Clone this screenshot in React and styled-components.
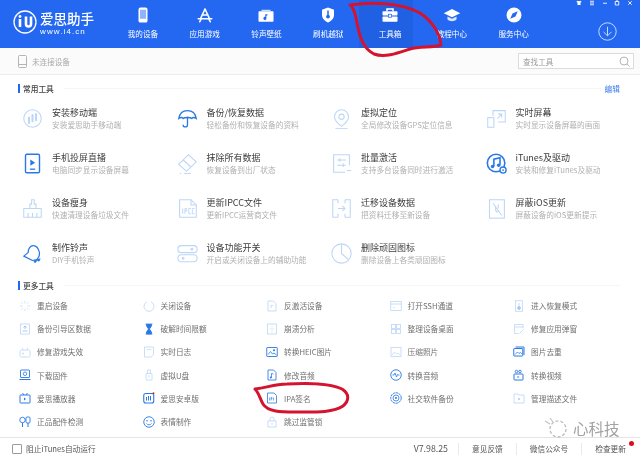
import React from "react";
import styled, { createGlobalStyle } from "styled-components";

const GlobalStyle = createGlobalStyle`
  html, body {
    margin: 0;
    padding: 0;
    background: #fff;
    font-family: "Noto Sans CJK SC", "Liberation Sans", sans-serif;
  }
`;

const LIGHT = "#bcd6f6";
const STRONG = "#2a78e6";

// every drawing sits in a 24x24 box
const icons = {
  // nav
  phone: <><rect x="6" y="2" width="12" height="20" rx="2.5" fill="#fff" /><rect x="8" y="5" width="8" height="12" fill="#8fb4fa" /></>,
  appstore: <path d="M12 4 6 17M12 4l6 13M3 17h18M8 12h8M5 21l2-4M19 21l-2-4" fill="none" stroke="#fff" strokeWidth="2.2" strokeLinecap="round" />,
  ring: <><path d="M3 7h18a1 1 0 0 1 1 1v12a1 1 0 0 1-1 1H3a1 1 0 0 1-1-1V8a1 1 0 0 1 1-1z" fill="#fff" /><path d="M6 5h12v2H6z" fill="#cfdcfb" /><path d="M11 11h3v1.500h-1.500v4a2 2 0 1 1-1.500-1.900z" fill="#2468f2" /></>,
  shield: <><path d="M12 2 20 5v7c0 5-4 8-8 10-4-2-8-5-8-10V5z" fill="#fff" /><circle cx="12" cy="14" r="2.500" fill="#2468f2" /><rect x="11" y="6" width="2" height="6" fill="#2468f2" /></>,
  toolbox: <><path d="M8 7V4h8v3" fill="none" stroke="#fff" strokeWidth="2" /><rect x="2" y="7" width="20" height="5.500" rx="1" fill="#fff" /><rect x="2" y="14" width="20" height="7" rx="1" fill="#fff" /><rect x="10" y="11" width="4" height="4" fill="#fff" stroke="#2468f2" /></>,
  cap: <><path d="M12 4 23 9.500 12 15 1 9.500z" fill="#fff" /><path d="M6 14v4c3 3 9 3 12 0v-4l-6 3z" fill="#dbe6fd" /></>,
  compass: <><circle cx="12" cy="12" r="10" fill="#fff" /><path d="M17 7 14 14 7 17 10 10z" fill="#2468f2" /></>,

  // big tools
  install: <><circle cx="12" cy="12" r="10" fill="none" stroke={LIGHT} strokeWidth="1.200" /><path d="M8 11v6M12 8v7M16 7v7" stroke={LIGHT} strokeWidth="2.400" strokeLinecap="round" /></>,
  umbrella: <><path d="M2 12C3 6 7 3 12 3s9 3 10 9c-2-1.500-4-1.500-5 0-1.500-1.500-8.500-1.500-10 0-1-1.500-3-1.500-5 0z" fill="none" stroke={STRONG} strokeWidth="1.500" /><path d="M12 10v9a2.500 2.500 0 0 1-5 0" fill="none" stroke={STRONG} strokeWidth="1.500" /></>,
  pin: <><path d="M12 2a8 8 0 0 1 8 8c0 4-4 8-8 11-4-3-8-7-8-11a8 8 0 0 1 8-8z" fill="none" stroke={LIGHT} strokeWidth="1.200" /><circle cx="12" cy="10" r="3" fill="none" stroke={LIGHT} strokeWidth="1.200" /><path d="M5 23.500h14" stroke={LIGHT} strokeWidth="1" /></>,
  mirror: <><path d="M8 9V3h14v13H14" fill="none" stroke={LIGHT} strokeWidth="1.200" /><rect x="2" y="11" width="7" height="11" fill="none" stroke={LIGHT} strokeWidth="1.200" /><path d="M13 12l5-5M14 7h4v4" fill="none" stroke={LIGHT} strokeWidth="1.200" /></>,
  cast: <><rect x="4" y="1.500" width="16" height="21" rx="1.500" fill="none" stroke={STRONG} strokeWidth="1.600" /><path d="M9.500 7.500 15 11l-5.500 3.500z" fill={STRONG} /><path d="M9 18.500h6" stroke={STRONG} strokeWidth="1.500" /></>,
  eraser: <><path d="M2 13 13 2l9 8-11 11z" fill="none" stroke={LIGHT} strokeWidth="1.200" /><path d="M7 8l9 8" stroke={LIGHT} strokeWidth="1.200" /><path d="M3 23.500h2M8 23.500h8" stroke={LIGHT} strokeWidth="1" /></>,
  batch: <><path d="M21 14V2H3v20h13" fill="none" stroke={LIGHT} strokeWidth="1.200" /><path d="M7 8h10M7 14h10M10 6v4M14 12v4M18 20h5" fill="none" stroke={LIGHT} strokeWidth="1.200" /></>,
  itunes: <><circle cx="11.500" cy="11.500" r="10" fill="none" stroke={STRONG} strokeWidth="1.800" /><path d="M9 15V7l7-1.500v8" fill="none" stroke={STRONG} strokeWidth="1.800" /><circle cx="7.500" cy="15.500" r="2" fill={STRONG} /><circle cx="14.500" cy="14" r="2" fill={STRONG} /><circle cx="19.500" cy="19.500" r="3.500" fill="#fff" stroke={STRONG} strokeWidth="1.500" /><circle cx="19.500" cy="19.500" r="1" fill={STRONG} /></>,
  brush: <><path d="M2 12h20v10H2zM9 12V7h2V2h3v5h2v5" fill="none" stroke={LIGHT} strokeWidth="1.200" /><path d="M7 17v5M12 17v5M17 17v5" stroke={LIGHT} strokeWidth="1.200" /></>,
  ipcc: <><path d="M3 2h13l6 6v14H3z" fill="none" stroke={LIGHT} strokeWidth="1.200" /><path d="M16 2v6h6" fill="none" stroke={LIGHT} strokeWidth="1.200" /><path d="M6.500 12v6M9 18v-6h2v3H9M16 12h-2.500v6H16M20 12h-2.500v6H20" fill="none" stroke={LIGHT} strokeWidth="1" /></>,
  migrate: <><path d="M8 2H2v20h6M16 2h6v20h-6" fill="none" stroke={LIGHT} strokeWidth="1.200" /><path d="M8 12h8M13 9l3 3-3 3M8 2v4M8 18v4M16 2v4M16 18v4" fill="none" stroke={LIGHT} strokeWidth="1.200" /></>,
  noupdate: <><rect x="4" y="2" width="17" height="21" fill="none" stroke={LIGHT} strokeWidth="1.200" /><path d="M8 6l10 14M11 9v4a3 3 0 0 0 3 3M14 7v5" fill="none" stroke={LIGHT} strokeWidth="1.200" /></>,
  bell: <><path d="M2 15 7 11c0-4 2-8 6-8s6 4 7 8c0 2 0 4-1 5l-2 3-5 1z" fill="none" stroke={STRONG} strokeWidth="1.400" strokeLinejoin="round" /><circle cx="19" cy="19.500" r="1.500" fill={STRONG} /><circle cx="15" cy="21" r="1.500" fill={STRONG} /><path d="M15 21l6-3" stroke={STRONG} strokeWidth="1.200" /></>,
  toggles: <><rect x="1" y="3" width="22" height="8" rx="4" fill="none" stroke={LIGHT} strokeWidth="1.200" /><circle cx="17" cy="7" r="1.500" fill={LIGHT} /><rect x="1" y="13.500" width="22" height="8" rx="4" fill="none" stroke={LIGHT} strokeWidth="1.200" /><circle cx="7" cy="17.500" r="1.500" fill={LIGHT} /></>,
  pie: <><circle cx="12" cy="12" r="11" fill="none" stroke={LIGHT} strokeWidth="1.200" /><path d="M12 1v11l8 7" fill="none" stroke={LIGHT} strokeWidth="1.200" /></>,

  // small tools
  restart: <path d="M12 2v5M12 17v5M2 12h5M17 12h5M5 5l3 3M16 16l3 3M19 5l-3 3M8 16l-3 3" stroke={LIGHT} strokeWidth="1.800" strokeDasharray="2 1" />,
  power: <path d="M8 3.500a10 10 0 1 0 8 0" fill="none" stroke={LIGHT} strokeWidth="1.600" />,
  fileArrow: <><path d="M4 2h11l5 5v15H4z" fill="none" stroke={LIGHT} strokeWidth="1.600" /><path d="M14 11h-4v5" fill="none" stroke={LIGHT} strokeWidth="1.600" /></>,
  terminal: <><rect x="1.500" y="3" width="21" height="18" fill="none" stroke={LIGHT} strokeWidth="1.600" /><path d="M1.500 8h21M6 15h3" stroke={LIGHT} strokeWidth="1.600" /></>,
  recovery: <><rect x="5" y="1.500" width="14" height="21" fill="none" stroke={LIGHT} strokeWidth="1.600" /><path d="M12 6v6" stroke={LIGHT} strokeWidth="1.600" /><circle cx="12" cy="16" r="2.500" fill="none" stroke={STRONG} strokeWidth="1.200" /></>,
  sector: <><rect x="3" y="2" width="18" height="20" fill="none" stroke={LIGHT} strokeWidth="1.600" /><path d="M7 16h10M12 12V7M9 9l3-3 3 3" fill="none" stroke={STRONG} strokeWidth="1.200" opacity=".7" /></>,
  hourglass: <path d="M5 2h14M5 22h14M7 2v4l4 6-4 6v4h10v-4l-4-6 4-6V2" fill={STRONG} stroke={STRONG} strokeWidth="1.500" />,
  crash: <><rect x="3" y="2" width="18" height="20" fill="none" stroke={LIGHT} strokeWidth="1.600" /><path d="M12 2v20M7 12h10" stroke={LIGHT} strokeWidth="1.200" strokeDasharray="2 2" /></>,
  desktop: <><rect x="3" y="3" width="8" height="8" fill="none" stroke={LIGHT} strokeWidth="1.600" /><rect x="13" y="3" width="8" height="8" fill="none" stroke={LIGHT} strokeWidth="1.600" /><rect x="3" y="13" width="8" height="8" fill="none" stroke={LIGHT} strokeWidth="1.600" /><rect x="13" y="13" width="8" height="8" fill="none" stroke={LIGHT} strokeWidth="1.600" /></>,
  popup: <><path d="M20 11V3H3v18h8" fill="none" stroke={LIGHT} strokeWidth="1.600" /><path d="M3 8h17M13 21l8-8" stroke={LIGHT} strokeWidth="1.600" /></>,
  game: <><rect x="2" y="8" width="20" height="14" rx="3" fill="none" stroke={LIGHT} strokeWidth="1.600" /><path d="M8 8 6 3M16 8l2-5M6 15h4M8 13v4" stroke={LIGHT} strokeWidth="1.400" /></>,
  log: <><path d="M3 2h18v15l-5 5H3z" fill="none" stroke={LIGHT} strokeWidth="1.600" /><path d="M7 7h10" stroke={LIGHT} strokeWidth="1.400" /></>,
  heic: <><rect x="1.500" y="3" width="21" height="18" rx="1" fill="none" stroke={STRONG} strokeWidth="1.800" /><circle cx="16" cy="8.500" r="2" fill={STRONG} /><path d="M4 17l5-6 4 5 3-2 5 4" fill="none" stroke={STRONG} strokeWidth="1.600" /></>,
  photo: <><rect x="2" y="3" width="20" height="18" fill="none" stroke={LIGHT} strokeWidth="1.600" /><path d="M4 18l5-6 4 4 3-2 4 4" fill="none" stroke={LIGHT} strokeWidth="1.400" /></>,
  watermark: <><rect x="1.500" y="5" width="18" height="15" rx="1" fill="none" stroke={STRONG} strokeWidth="2" /><path d="M5 2h17v16" fill="none" stroke={STRONG} strokeWidth="2" /><path d="M4 17l5-5 3 3 3-2 3 3" fill="none" stroke={STRONG} strokeWidth="1.600" /></>,
  firmware: <><rect x="3" y="2" width="18" height="15" rx="1" fill="none" stroke={STRONG} strokeWidth="1.800" /><circle cx="12" cy="9.500" r="3.500" fill="none" stroke={STRONG} strokeWidth="1.600" /><path d="M1 21h22" stroke={STRONG} strokeWidth="2" /></>,
  udisk: <><rect x="6" y="9" width="12" height="13" rx="1" fill="none" stroke={LIGHT} strokeWidth="1.600" /><path d="M9 9V2h6v7M12 13v4" fill="none" stroke={LIGHT} strokeWidth="1.600" /></>,
  audioFile: <><path d="M4 2h11l5 5v15H4z" fill="none" stroke={STRONG} strokeWidth="1.700" /><path d="M11 17V9l4 1" fill="none" stroke={STRONG} strokeWidth="1.600" /><circle cx="9.500" cy="17" r="2" fill={STRONG} /></>,
  wave: <><circle cx="12" cy="12" r="10.500" fill="none" stroke={STRONG} strokeWidth="1.800" /><path d="M5 12h3l2-4 3 8 2-5 1 1h3" fill="none" stroke={STRONG} strokeWidth="1.600" /></>,
  video: <><rect x="2" y="10" width="18" height="12" rx="1" fill="none" stroke={STRONG} strokeWidth="2" /><circle cx="7" cy="5" r="2.500" fill="none" stroke={STRONG} strokeWidth="1.800" /><circle cx="14" cy="5" r="2.500" fill="none" stroke={STRONG} strokeWidth="1.800" /><path d="M9 14v4l4-2z" fill={STRONG} /></>,
  player: <><rect x="2" y="6" width="20" height="16" rx="1" fill="none" stroke={STRONG} strokeWidth="2" /><path d="M7 2l3 4M17 2l-3 4" stroke={STRONG} strokeWidth="1.800" /><path d="M10 11v6l4-3z" fill={STRONG} /></>,
  android: <><rect x="1.500" y="3" width="20" height="19" rx="4" fill="none" stroke={STRONG} strokeWidth="2.200" /><path d="M7 10v7M11 8v9M15 8v9" stroke={STRONG} strokeWidth="2" /><circle cx="21" cy="2.500" r="2" fill="#e0202c" /></>,
  ipa: <><path d="M3 2h13l5 5v15H3z" fill="none" stroke={STRONG} strokeWidth="1.600" /><path d="M7 11v6M10 17v-6h2v3h-2M15 17v-6" fill="none" stroke={STRONG} strokeWidth="1.200" /></>,
  social: <><circle cx="12" cy="12" r="10.500" fill="none" stroke={STRONG} strokeWidth="1.800" strokeDasharray="5 1" /><circle cx="12" cy="12" r="6" fill="none" stroke={STRONG} strokeWidth="1.600" /><circle cx="12" cy="12" r="2" fill={STRONG} /></>,
  profile: <><path d="M2 4h8l2 2h10v16H2z" fill="none" stroke={LIGHT} strokeWidth="1.600" /><rect x="10" y="12" width="4" height="4" fill={LIGHT} /></>,
  accessory: <><circle cx="7" cy="8" r="5.500" fill="none" stroke={STRONG} strokeWidth="1.800" /><rect x="14" y="2" width="8" height="12" rx="2" fill="none" stroke={STRONG} strokeWidth="1.800" /><path d="M7 14v8M18 14v8" stroke={STRONG} strokeWidth="2" /></>,
  smile: <><circle cx="12" cy="12" r="10.500" fill="none" stroke={STRONG} strokeWidth="1.800" /><circle cx="8" cy="9.500" r="1.500" fill={STRONG} /><circle cx="16" cy="9.500" r="1.500" fill={STRONG} /><path d="M7 15c2 3.500 8 3.500 10 0" fill="none" stroke={STRONG} strokeWidth="1.600" /></>,
  lock: <><rect x="4" y="10" width="16" height="12" fill="none" stroke={LIGHT} strokeWidth="1.600" /><path d="M8 10V6a4 4 0 0 1 8 0v4M12 14v4" fill="none" stroke={LIGHT} strokeWidth="1.600" /></>,
};

const navItems = [
  { label: "我的设备", icon: "phone" },
  { label: "应用游戏", icon: "appstore" },
  { label: "铃声壁纸", icon: "ring" },
  { label: "刷机越狱", icon: "shield" },
  { label: "工具箱", icon: "toolbox", active: true },
  { label: "教程中心", icon: "cap" },
  { label: "服务中心", icon: "compass" },
];

const commonTools = [
  { icon: "install", title: "安装移动端", desc: "安装爱思助手移动端" },
  { icon: "umbrella", title: "备份/恢复数据", desc: "轻松备份和恢复设备的资料" },
  { icon: "pin", title: "虚拟定位", desc: "全局修改设备GPS定位信息" },
  { icon: "mirror", title: "实时屏幕", desc: "实时显示设备屏幕的画面" },
  { icon: "cast", title: "手机投屏直播", desc: "电脑同步显示设备屏幕" },
  { icon: "eraser", title: "抹除所有数据", desc: "恢复设备到出厂状态" },
  { icon: "batch", title: "批量激活", desc: "支持多台设备同时进行激活" },
  { icon: "itunes", title: "iTunes及驱动", desc: "安装和修复iTunes及驱动" },
  { icon: "brush", title: "设备瘦身", desc: "快速清理设备垃圾文件" },
  { icon: "ipcc", title: "更新IPCC文件", desc: "更新IPCC运营商文件" },
  { icon: "migrate", title: "迁移设备数据", desc: "把资料迁移至新设备" },
  { icon: "noupdate", title: "屏蔽iOS更新", desc: "屏蔽设备的iOS更新提示" },
  { icon: "bell", title: "制作铃声", desc: "DIY手机铃声" },
  { icon: "toggles", title: "设备功能开关", desc: "开启或关闭设备上的辅助功能" },
  { icon: "pie", title: "删除顽固图标", desc: "删除设备上各类顽固图标" },
];

const moreTools = [
  ["restart", "重启设备"], ["power", "关闭设备"], ["fileArrow", "反激活设备"], ["terminal", "打开SSH通道"], ["recovery", "进入恢复模式"],
  ["sector", "备份引导区数据"], ["hourglass", "破解时间限额"], ["crash", "崩溃分析"], ["desktop", "整理设备桌面"], ["popup", "修复应用弹窗"],
  ["game", "修复游戏失效"], ["log", "实时日志"], ["heic", "转换HEIC图片"], ["photo", "压缩照片"], ["watermark", "图片去重"],
  ["firmware", "下载固件"], ["udisk", "虚拟U盘"], ["audioFile", "修改音频"], ["wave", "转换音频"], ["video", "转换视频"],
  ["player", "爱思播放器"], ["android", "爱思安卓版"], ["ipa", "IPA签名"], ["social", "社交软件备份"], ["profile", "管理描述文件"],
  ["accessory", "正品配件检测"], ["smile", "表情制作"], ["lock", "跳过监管锁"],
];

const Page = styled.div`
  position: relative;
  width: 640px;
  height: 457px;
  overflow: hidden;
  display: flex;
  flex-direction: column;
  background: #fff;
  filter: blur(0.35px);
`;

const Header = styled.header`
  height: 48px;
  flex: none;
  display: flex;
  background: #2468f2;
  color: #fff;
`;

const Logo = styled.div`
  width: 112px;
  flex: none;
  display: flex;
  align-items: center;
  gap: 3px;
  padding: 0 0 2px 13px;
  box-sizing: border-box;
`;

const LogoMark = styled.svg`
  width: 24px;
  height: 24px;
  margin-bottom: 2px;
`;

const LogoText = styled.div`
  display: flex;
  flex-direction: column;
  gap: 3px;
`;

const LogoName = styled.span`
  font-size: 13.5px;
  line-height: 14px;
  font-weight: 500;
  white-space: nowrap;
`;

const LogoUrl = styled.span`
  font-family: "Liberation Sans", sans-serif;
  font-size: 8px;
  line-height: 8px;
  letter-spacing: 1.1px;
  white-space: nowrap;
`;

const Nav = styled.nav`
  display: flex;
`;

const NavItem = styled.div`
  width: 61.8px;
  display: flex;
  flex-direction: column;
  align-items: center;
  padding-top: 6px;
  box-sizing: border-box;
  gap: 5px;
  font-size: 7.6px;
  line-height: 10px;
  white-space: nowrap;
  background: ${(p) => (p.$active ? "linear-gradient(90deg, #2060e2 87%, transparent 87%)" : "transparent")};
`;

const HeaderSide = styled.div`
  flex: 1;
  display: flex;
  flex-direction: column;
  align-items: flex-end;
  padding-right: 7px;
`;

const WindowButtons = styled.div`
  display: flex;
  gap: 6.7px;
  margin-bottom: 16px;
`;

const Download = styled.svg`
  width: 19px;
  height: 19px;
  margin-right: 16px;
`;

const SubBar = styled.div`
  height: 26px;
  flex: none;
  display: flex;
  align-items: center;
  justify-content: space-between;
  padding: 0 6px 0 18px;
  background: #fbfbfb;
  border-bottom: 1px solid #ececec;
`;

const Device = styled.div`
  display: flex;
  align-items: center;
  gap: 5px;
  font-size: 7.6px;
  color: #a9a9a9;
`;

const SearchBox = styled.div`
  width: 116px;
  height: 16px;
  box-sizing: border-box;
  display: flex;
  align-items: center;
  justify-content: space-between;
  padding: 0 3px 0 4px;
  background: #fff;
  border: 1px solid #dcdcdc;
  font-size: 7.6px;
  color: #9b9b9b;
`;

const SectionHead = styled.div`
  height: ${(p) => p.$height}px;
  display: flex;
  align-items: center;
  padding: 0 20px 0 18px;
  font-size: 7.7px;
  color: #444;
`;

const SectionTitle = styled.span`
  border-left: 2px solid #2468f2;
  padding-left: 3px;
  line-height: 9px;
  white-space: nowrap;
  font-weight: 500;
`;

const HeadLine = styled.span`
  flex: 1;
  height: 1px;
  margin-left: 10px;
  background: #f6f6f6;
`;

const EditLink = styled.a`
  margin-left: 4px;
  color: #3f7fe8;
  font-size: 7.7px;
`;

const CommonGrid = styled.div`
  display: grid;
  grid-template-columns: repeat(4, 154.5px);
  grid-auto-rows: 45px;
  padding-left: 22px;
  margin-top: -5px;
`;

const BigTool = styled.div`
  display: flex;
  align-items: center;
  gap: 9px;
`;

const BigIcon = styled.svg`
  width: 21px;
  height: 21px;
  flex: none;
`;

const BigText = styled.div`
  display: flex;
  flex-direction: column;
  gap: 2px;
  white-space: nowrap;
`;

const BigTitle = styled.span`
  font-size: 9px;
  line-height: 10px;
  color: #3c3c3c;
`;

const BigDesc = styled.span`
  font-size: 7.7px;
  line-height: 10px;
  color: #b0b0b0;
`;

const MoreGrid = styled.div`
  display: grid;
  grid-template-columns: repeat(5, 123.5px);
  grid-auto-rows: 23.2px;
  padding-left: 19px;
`;

const SmallTool = styled.div`
  display: flex;
  align-items: center;
  gap: 6px;
  font-size: 7.7px;
  color: #707070;
  white-space: nowrap;
`;

const SmallIcon = styled.svg`
  width: 12px;
  height: 12px;
  flex: none;
`;

const Footer = styled.footer`
  margin-top: auto;
  height: 20px;
  box-sizing: border-box;
  flex: none;
  display: flex;
  align-items: center;
  padding: 2px 1px 0 12px;
  border-top: 1px solid #e4e4e4;
  font-size: 7.7px;
  color: #555;
  white-space: nowrap;
`;

const CheckBox = styled.span`
  width: 8px;
  height: 8px;
  border: 1px solid #9a9a9a;
  border-radius: 1px;
  margin-right: 4px;
`;

const FooterSpacer = styled.span`
  flex: 1;
`;

const FooterCell = styled.span`
  position: relative;
  padding: 0 ${(p) => p.$pad}px;
  line-height: 12px;
  font-size: ${(p) => p.$size || 7.7}px;
  border-left: ${(p) => (p.$first ? "none" : "1px solid #eaeaea")};
`;

const RedDot = styled.span`
  position: absolute;
  top: -2px;
  right: 5px;
  width: 5px;
  height: 5px;
  border-radius: 50%;
  background: #e00a1e;
`;

const Scribbles = styled.svg`
  position: absolute;
  inset: 0;
  width: 640px;
  height: 457px;
  pointer-events: none;
`;

const Watermark = styled.div`
  position: absolute;
  left: 543px;
  top: 417px;
  display: flex;
  align-items: center;
  gap: 3px;
  font-size: 15.5px;
  line-height: 22px;
  color: #a2a2a2;
`;

const Nav24 = styled.svg`
  width: ${(p) => p.$size}px;
  height: ${(p) => p.$size}px;
`;

const windowIcons = [
  <path key="s" d="M7 3 2 6l2 4 2-1v11h12V9l2 1 2-4-5-3c-1 2-9 2-10 0z" fill="#fff" />,
  <path key="l" d="M4 5h16M4 12h16M4 19h16" stroke="#fff" strokeWidth="3.500" />,
  <path key="m" d="M4 13h16" stroke="#fff" strokeWidth="3.500" />,
  <path key="r" d="M5 6h14v14H5zM9 3h6" fill="none" stroke="#fff" strokeWidth="3.500" />,
  <path key="x" d="M5 5l14 14M19 5 5 19" stroke="#fff" strokeWidth="3.500" />,
];

const App = () => (
  <Page>
    <GlobalStyle />
    <Header>
      <Logo>
        <LogoMark viewBox="0 0 24 24">
          <circle cx="12" cy="12" r="11" fill="none" stroke="#fff" strokeWidth="1.300" />
          <path d="M7 9v8M13 6.500V14a2.500 2.500 0 0 0 5 0V6.500" fill="none" stroke="#fff" strokeWidth="2.600" />
          <circle cx="7" cy="6.500" r="1.400" fill="#fff" />
        </LogoMark>
        <LogoText>
          <LogoName>爱思助手</LogoName>
          <LogoUrl>www.i4.cn</LogoUrl>
        </LogoText>
      </Logo>
      <Nav>
        {navItems.map((item) => (
          <NavItem key={item.label} $active={item.active}>
            <Nav24 viewBox="0 0 24 24" $size={18}>{icons[item.icon]}</Nav24>
            {item.label}
          </NavItem>
        ))}
      </Nav>
      <HeaderSide>
        <WindowButtons>
          {windowIcons.map((icon) => (
            <Nav24 key={icon.key} viewBox="0 0 24 24" $size={6}>{icon}</Nav24>
          ))}
        </WindowButtons>
        <Download viewBox="0 0 24 24">
          <circle cx="12" cy="12" r="11" fill="none" stroke="#cfe0ff" strokeWidth="1.200" />
          <path d="M12 6v11M7 12.500l5 5 5-5" fill="none" stroke="#cfe0ff" strokeWidth="1.200" />
        </Download>
      </HeaderSide>
    </Header>

    <SubBar>
      <Device>
        <svg width="9" height="13" viewBox="0 0 9 13">
          <rect x=".5" y=".5" width="8" height="12" rx="1" fill="none" stroke="#b5b5b5" />
          <path d="M.5 9.500h8" stroke="#b5b5b5" />
        </svg>
        未连接设备
      </Device>
      <SearchBox>
        查找工具
        <svg width="11" height="11" viewBox="0 0 11 11">
          <circle cx="5" cy="5" r="4" fill="none" stroke="#b5b5b5" />
          <path d="M8 8l2.500 2.500" stroke="#b5b5b5" />
        </svg>
      </SearchBox>
    </SubBar>

    <SectionHead $height={26}>
      <SectionTitle>常用工具</SectionTitle>
      <HeadLine />
      <EditLink>编辑</EditLink>
    </SectionHead>
    <CommonGrid>
      {commonTools.map((tool) => (
        <BigTool key={tool.title}>
          <BigIcon viewBox="0 0 24 24">{icons[tool.icon]}</BigIcon>
          <BigText>
            <BigTitle>{tool.title}</BigTitle>
            <BigDesc>{tool.desc}</BigDesc>
          </BigText>
        </BigTool>
      ))}
    </CommonGrid>

    <SectionHead $height={18}>
      <SectionTitle>更多工具</SectionTitle>
      <HeadLine />
    </SectionHead>
    <MoreGrid>
      {moreTools.map(([icon, label]) => (
        <SmallTool key={label}>
          <SmallIcon viewBox="0 0 24 24">{icons[icon]}</SmallIcon>
          {label}
        </SmallTool>
      ))}
    </MoreGrid>

    <Footer>
      <CheckBox />
      阻止iTunes自动运行
      <FooterSpacer />
      <FooterCell $first $pad={10} $size={8.8}>V7.98.25</FooterCell>
      <FooterCell $pad={13}>意见反馈</FooterCell>
      <FooterCell $pad={13}>微信公众号</FooterCell>
      <FooterCell $pad={13}>
        检查更新
        <RedDot />
      </FooterCell>
    </Footer>

    <Watermark>
      <svg width="27" height="22" viewBox="0 0 27 22">
        <circle cx="15" cy="12" r="8" fill="none" stroke="#b5b5b5" strokeWidth="1.200" strokeDasharray="3 2" />
        <path d="M2 4l5 3M7 1l3 4" stroke="#c4c4c4" strokeWidth="1.200" />
      </svg>
      心科技
    </Watermark>

    <Scribbles viewBox="0 0 640 457">
      <path
        d="M350 5C370 2 400 2 420 13C432 21 440 33 441 45C433 48 420 46 410 49C398 53 385 58 374 54C364 49 360 38 358 28C356 20 356 12 352 7"
        fill="none" stroke="#d3132f" strokeWidth="3" strokeLinecap="round" strokeLinejoin="round"
      />
      <path
        d="M255 389c12-1 18-5 32-5 22-1 42-1 55 5 8 5 7 12 1 17-10 7-30 6-48 6-14 0-27 0-32-8-3-5-4-11-8-15z"
        fill="none" stroke="#d3132f" strokeWidth="3" strokeLinejoin="round"
      />
    </Scribbles>
  </Page>
);

export default App;
